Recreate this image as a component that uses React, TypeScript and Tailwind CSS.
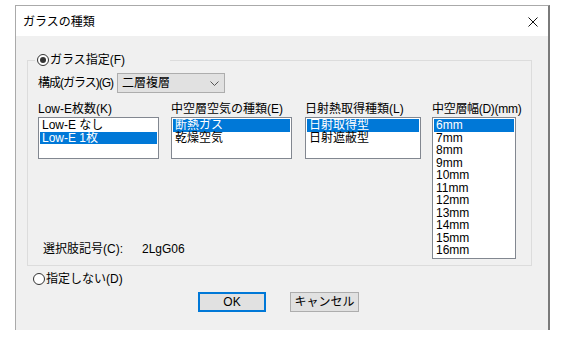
import React from 'react';

const font = "font-['Liberation_Sans','Noto_Sans_CJK_JP',sans-serif]";

function Radio({ checked }: { checked: boolean }) {
  return (
    <span className="w-[12px] h-[12px] rounded-full border border-[#333333] bg-white flex items-center justify-center shrink-0">
      {checked && <span className="w-[6px] h-[6px] rounded-full bg-[#333333]" />}
    </span>
  );
}

function ListBox({
  items,
  selected,
  width,
  height,
}: {
  items: string[];
  selected: number;
  width: string;
  height: string;
}) {
  return (
    <div className={`${width} ${height} border border-[#828790] bg-white p-[1px] overflow-hidden`}>
      {items.map((item, i) => (
        <div
          key={item}
          className={`h-[12.5px] leading-[12.5px] pl-[2px] whitespace-nowrap ${
            i === selected ? 'bg-[#0078d7] text-white' : 'text-black'
          }`}
        >
          {item}
        </div>
      ))}
    </div>
  );
}

export default function App() {
  const widths = ['6mm', '7mm', '8mm', '9mm', '10mm', '11mm', '12mm', '13mm', '14mm', '15mm', '16mm'];

  return (
    <div className={`w-[567px] h-[340px] bg-white pt-[5px] pl-[15px] text-[12px] text-black whitespace-nowrap ${font}`}>
      <div className="w-[535px] h-[325px] border-t border-l border-[#aaaaaa] border-r-2 border-r-[#7a7a7a] flex flex-col">
        {/* title bar */}
        <div className="h-[30px] shrink-0 bg-white flex items-center justify-between pl-[7px] pr-[10px] pt-[2px]">
          <span className="leading-[14px]">ガラスの種類</span>
          <svg width="10" height="10" viewBox="0 0 10 10">
            <path d="M0.5 0.5L9.5 9.5M9.5 0.5L0.5 9.5" stroke="#111" strokeWidth="1" />
          </svg>
        </div>

        {/* body */}
        <div className="flex-1 bg-[#f0f0f0] pl-[11px] pt-[24px]">
          <div className="relative w-[505px] border border-[#dcdcdc] pt-[12px] pl-[10px] pb-[6px]">
            <div className="absolute left-[7px] top-[-8px] w-[135px] h-[14px] bg-[#f0f0f0] flex items-center gap-[1px] pl-[2px]">
              <Radio checked />
              <span className="leading-[14px]">ガラス指定(F)</span>
            </div>

            <div className="flex items-center h-[20px]">
              <span className="w-[79px] shrink-0 leading-[14px] tracking-[-1px]">構成(ガラス)(G)</span>
              <div className="w-[108px] h-[20px] border border-[#adadad] bg-[#e1e1e1] flex items-center justify-between pl-[4px] pr-[5px]">
                <span className="leading-[14px]">二層複層</span>
                <svg width="9" height="5" viewBox="0 0 9 5">
                  <path d="M0.5 0.5L4.5 4.5L8.5 0.5" stroke="#555" strokeWidth="1" fill="none" />
                </svg>
              </div>
            </div>

            <div className="flex mt-[9px]">
              <div className="flex flex-col w-[383px]">
                <div className="flex gap-[12px]">
                  <div className="flex flex-col">
                    <span className="h-[14px] leading-[14px] mb-[1px]">Low-E枚数(K)</span>
                    <ListBox items={['Low-E なし', 'Low-E 1枚']} selected={1} width="w-[121px]" height="h-[42px]" />
                  </div>
                  <div className="flex flex-col">
                    <span className="h-[14px] leading-[14px] mb-[1px]">中空層空気の種類(E)</span>
                    <ListBox items={['断熱ガス', '乾燥空気']} selected={0} width="w-[121px]" height="h-[42px]" />
                  </div>
                  <div className="flex flex-col ml-[1px]">
                    <span className="h-[14px] leading-[14px] mb-[1px]">日射熱取得種類(L)</span>
                    <ListBox items={['日射取得型', '日射遮蔽型']} selected={0} width="w-[116px]" height="h-[42px]" />
                  </div>
                </div>
                <div className="mt-auto mb-[3px] flex items-center h-[14px] pl-[5px]">
                  <span className="w-[99px] leading-[14px]">選択肢記号(C):</span>
                  <span className="leading-[14px]">2LgG06</span>
                </div>
              </div>
              <div className="flex flex-col ml-[11px]">
                <span className="h-[14px] leading-[14px] mb-[1px] tracking-[-0.3px]">中空層幅(D)(mm)</span>
                <ListBox items={widths} selected={0} width="w-[84px]" height="h-[142px]" />
              </div>
            </div>
          </div>

          <div className="flex items-center gap-[1px] h-[14px] mt-[6px] ml-[6px]">
            <Radio checked={false} />
            <span className="leading-[14px]">指定しない(D)</span>
          </div>

          <div className="flex gap-[24px] mt-[6px] ml-[171px]">
            <button className="w-[68px] h-[20px] border-2 border-[#0078d7] bg-[#e1e1e1] flex items-center justify-center leading-[14px]">
              OK
            </button>
            <button className="w-[69px] h-[20px] border border-[#adadad] bg-[#e1e1e1] flex items-center justify-center leading-[14px]">
              キャンセル
            </button>
          </div>
        </div>
      </div>
    </div>
  );
}
